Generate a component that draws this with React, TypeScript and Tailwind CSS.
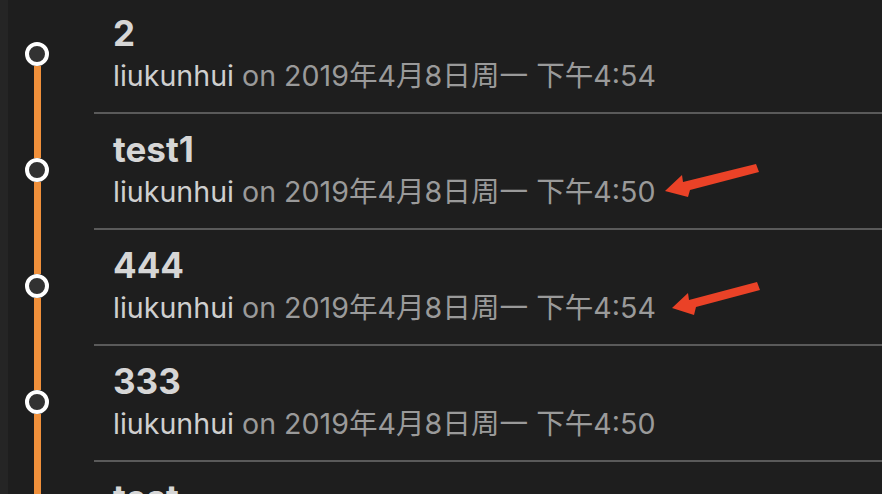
const commits = [
  { title: "2", time: "下午4:54" },
  { title: "test1", time: "下午4:50" },
  { title: "444", time: "下午4:54" },
  { title: "333", time: "下午4:50" },
  { title: "test", time: "下午4:50" },
];

const font = { fontFamily: '"Inter", "Noto Sans CJK SC", sans-serif' };

const Arrows: React.FC = () => (
  <svg
    className="absolute left-0 top-0 pointer-events-none"
    width="882"
    height="494"
    viewBox="0 0 882 494"
  >
    <polygon
      fill="#ea4227"
      points="665,191 682,175 683,182 756,164 759,172 690,190 688,197"
    />
    <polygon
      fill="#ea4227"
      points="672,308 688,293 689,300 757,282 760,290 696,307 694,315"
    />
  </svg>
);

export default function App() {
  return (
    <div
      className="relative w-[882px] h-[494px] overflow-hidden bg-[#1e1e1e] flex"
      style={font}
    >
      <div className="w-2 bg-[#252525] shrink-0" />
      <div className="flex-1 flex flex-col -mt-[2px]">
        {commits.map((c, i) => (
          <div key={i} className="flex h-[116px] shrink-0">
            <div className="w-[58px] flex flex-col items-center">
              <div
                className={`w-[7px] flex-[1_1_0px] ${i === 0 ? "bg-transparent" : "bg-[#f0903b]"}`}
              />
              <div className="w-6 h-6 rounded-full border-4 border-white bg-[#323232] shrink-0" />
              <div className="w-[7px] flex-[1_1_4px] bg-[#f0903b]" />
            </div>
            <div className="ml-7 flex-1 flex flex-col justify-center pl-[19px] pb-1 border-b-2 border-[#5a5a5a]">
              <div className="text-[35px] leading-[40px] font-bold text-[#d6d6d6] mb-[5px]">
                {c.title}
              </div>
              <div className="text-[28.6px] leading-[36px] text-[#9a9a9a]">
                <span className="text-[#cfcfcf]">liukunhui</span> on 2019年4月8日周一 {c.time}
              </div>
            </div>
          </div>
        ))}
      </div>
      <Arrows />
    </div>
  );
}
